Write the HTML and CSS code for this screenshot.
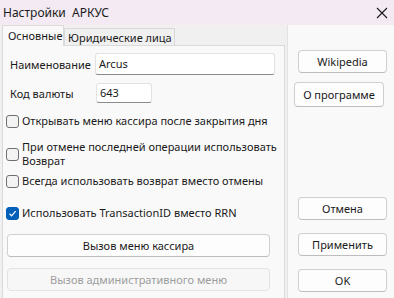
FILE: index.html
```html
<!DOCTYPE html>
<html lang="ru">
<head>
    <meta charset="UTF-8">
    <title>Настройки АРКУС</title>
    <link rel="stylesheet" href="styles.css">
</head>
<body>
    <div class="window">
        <!-- Title bar -->
        <header class="titlebar">
            <span class="title">Настройки &nbsp;АРКУС</span>
            <svg class="close" width="12" height="12" viewBox="0 0 12 12">
                <path d="M1 1 L11 11 M11 1 L1 11" stroke="#1a1a1a" stroke-width="1.1" fill="none"/>
            </svg>
        </header>

        <div class="body">
            <!-- Tabs -->
            <section class="tabs">
                <div class="tab-row">
                    <div class="tab active">Основные</div>
                    <div class="tab">Юридические лица</div>
                </div>
                <div class="tab-panel">
                    <div class="field">
                        <label>Наименование</label>
                        <div class="input wide">Arcus</div>
                    </div>
                    <div class="field">
                        <label>Код валюты</label>
                        <div class="input short">643</div>
                    </div>

                    <div class="check first">
                        <span class="box"></span>
                        <span>Открывать меню кассира после закрытия дня</span>
                    </div>
                    <div class="check two">
                        <span class="box"></span>
                        <span>При отмене последней операции использовать Возврат</span>
                    </div>
                    <div class="check after-two">
                        <span class="box"></span>
                        <span>Всегда использовать возврат вместо отмены</span>
                    </div>
                    <div class="check last">
                        <span class="box checked">
                            <svg width="9" height="9" viewBox="0 0 9 9"><path d="M1.5 4.8 L3.6 6.8 L7.6 2.2" stroke="#fff" stroke-width="1.2" fill="none"/></svg>
                        </span>
                        <span>Использовать TransactionID вместо RRN</span>
                    </div>

                    <button class="btn block">Вызов меню кассира</button>
                    <button class="btn block disabled">Вызов административного меню</button>
                </div>
            </section>

            <!-- Side buttons -->
            <aside class="side">
                <button class="btn wiki">Wikipedia</button>
                <button class="btn about">О программе</button>
                <div class="spacer"></div>
                <button class="btn act">Отмена</button>
                <button class="btn act">Применить</button>
                <button class="btn act">OK</button>
            </aside>
        </div>
    </div>
</body>
</html>
```

FILE: styles.css
```css
body {
    margin: 0;
    font-family: "Noto Sans", "Open Sans", sans-serif;
    font-size: 11px;
    color: #1a1a1a;
    background: #f0f0f0;
}

.window {
    width: 394px;
    height: 298px;
    display: flex;
    flex-direction: column;
    overflow: hidden;
}

.titlebar {
    height: 25px;
    background: #f3eaf3;
    display: flex;
    align-items: center;
    justify-content: space-between;
    padding: 0 6px 0 3px;
}

.title {
    font-size: 12px;
    line-height: 16px;
}

.body {
    flex: 1;
    display: flex;
    min-height: 0;
}

.tabs {
    width: 283px;
    margin-left: 2px;
    display: flex;
    flex-direction: column;
}

.tab-row {
    display: flex;
    align-items: flex-end;
    height: 20px;
    flex: none;
}

.tab {
    height: 17px;
    line-height: 15px;
    padding: 1px 2px 0 3px;
    background: #f0f0f0;
    border: 1px solid #d9d9d9;
    border-bottom: none;
    box-sizing: border-box;
    white-space: nowrap;
}

.tab.active {
    height: 21px;
    line-height: 19px;
    background: #f9f9f9;
    border-color: #dadada;
    margin-bottom: -1px;
    position: relative;
    z-index: 1;
    width: 62px;
    padding: 0 0 0 5px;
}

.tab-panel {
    flex: 1;
    background: #f9f9f9;
    border: 1px solid #dadada;
    border-bottom: none;
    padding: 7px 0 0 3px;
}

.field {
    display: flex;
    align-items: center;
    margin-bottom: 8px;
}

.field label {
    width: 85px;
    padding-left: 4px;
}

.input {
    background: #fff;
    border: 1px solid #e2e2e2;
    border-bottom-color: #8a8a8a;
    border-radius: 3px;
    padding: 0 3px;
    box-sizing: border-box;
}

.input.wide {
    width: 180px;
    height: 22px;
    line-height: 20px;
}

.input.short {
    width: 56px;
    height: 20px;
    line-height: 18px;
    margin-left: 1px;
}

.check {
    display: flex;
    align-items: center;
    gap: 3px;
    line-height: 14px;
}

.check.first {
    margin-top: 11px;
}

.check.two {
    margin-top: 12px;
}

.check.after-two {
    margin-top: 6px;
}

.check.last {
    margin-top: 18px;
}

.box {
    flex: none;
    width: 11px;
    height: 11px;
    border: 1px solid #707070;
    border-radius: 3px;
    background: #f3f3f3;
    display: flex;
    align-items: center;
    justify-content: center;
}

.box.checked {
    background: #005fb8;
    border-color: #005fb8;
}

.btn {
    font-family: inherit;
    font-size: 11px;
    color: #1a1a1a;
    background: #fdfdfd;
    border: 1px solid #d0d0d0;
    border-bottom-color: #bdbdbd;
    border-radius: 4px;
    padding: 0;
    height: 23px;
}

.btn.block {
    display: block;
    width: 263px;
    margin-left: 1px;
    margin-top: 14px;
}

.btn.block + .btn.block {
    margin-top: 11px;
}

.btn.disabled {
    color: #9d9d9d;
    background: #f7f7f7;
    border-color: #e3e3e3;
}

.side {
    flex: 1;
    margin-left: 2px;
    background: #f9f9f9;
    border-left: 1px solid #e3e3e3;
    display: flex;
    flex-direction: column;
    padding-top: 25px;
}

.btn.wiki {
    width: 89px;
    margin-left: 10px;
}

.btn.about {
    width: 90px;
    height: 25px;
    margin-left: 6px;
    margin-top: 9px;
}

.spacer {
    flex: 1;
}

.btn.act {
    width: 89px;
    margin-left: 10px;
    margin-bottom: 13px;
}

.btn.act:last-child {
    margin-bottom: 6px;
}
```
